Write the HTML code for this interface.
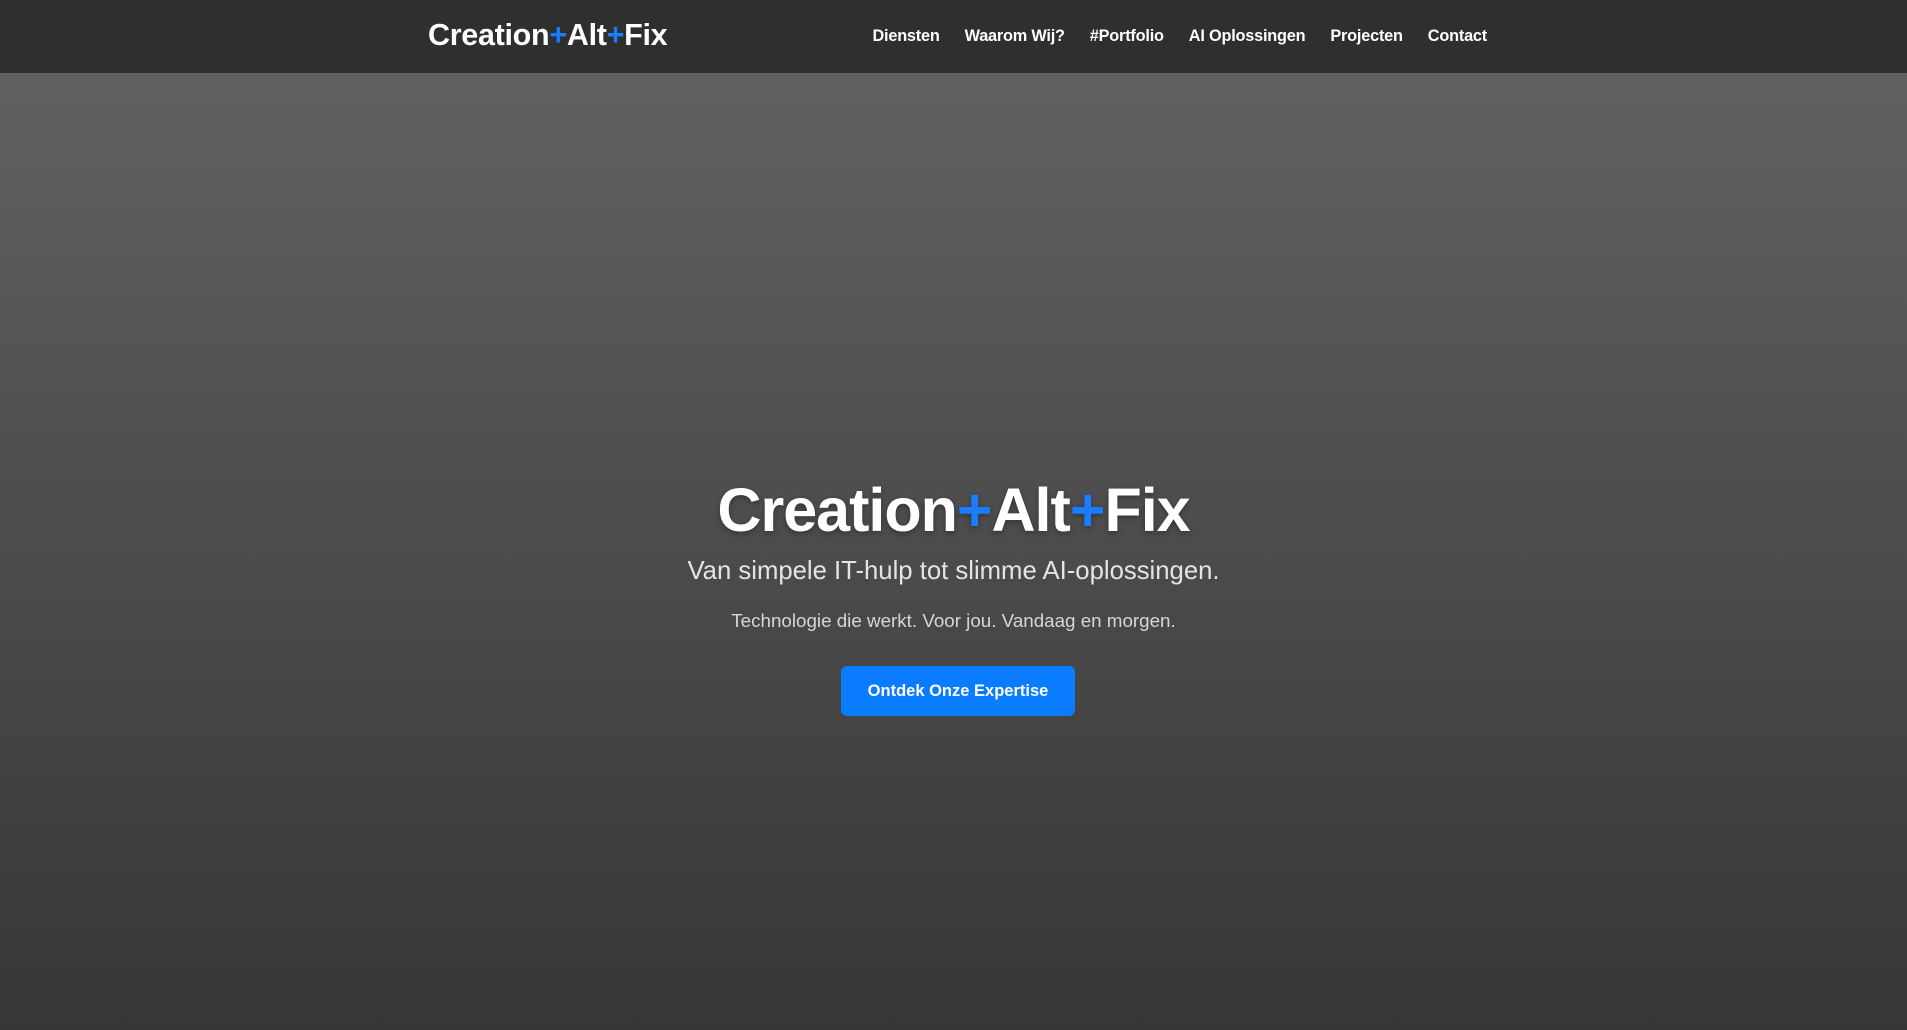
<!DOCTYPE html>
<html><head><meta charset="utf-8"><style>
*{margin:0;padding:0;box-sizing:border-box}
body{width:1907px;height:1030px;overflow:hidden;font-family:"Liberation Sans",sans-serif;background:linear-gradient(#646464,#363636);position:relative}
nav{position:absolute;top:0;left:0;width:1907px;height:73px;background:#2f2f2f}
.logo{position:absolute;left:428px;top:18px;font-size:30.5px;font-weight:bold;color:#fff;letter-spacing:-0.3px}
.b{color:#1a7cff}
.links{position:absolute;right:420px;top:27px;display:flex;gap:25px;font-size:16.3px;color:#fff;font-weight:bold;letter-spacing:-0.2px}
h1{position:absolute;left:0;width:1907px;top:475px;text-align:center;font-size:61px;font-weight:bold;color:#fff;letter-spacing:-1px;text-shadow:0 2px 6px rgba(0,0,0,.35)}
.sub{position:absolute;left:0;width:1907px;top:557px;text-align:center;font-size:25.7px;color:#e4e4e4}
.tag{position:absolute;left:0;width:1907px;top:610px;text-align:center;font-size:18.8px;color:#d6d6d6}
.btn{position:absolute;left:841px;top:666px;width:234px;height:50px;background:#0a7cff;border-radius:6px;color:#fff;font-weight:bold;font-size:16.5px;text-align:center;line-height:51px}
</style></head><body>
<nav><div class="logo">Creation<span class="b">+</span>Alt<span class="b">+</span>Fix</div>
<div class="links"><span>Diensten</span><span>Waarom Wij?</span><span>#Portfolio</span><span>AI Oplossingen</span><span>Projecten</span><span>Contact</span></div></nav>
<h1>Creation<span class="b">+</span>Alt<span class="b">+</span>Fix</h1>
<div class="sub">Van simpele IT-hulp tot slimme AI-oplossingen.</div>
<div class="tag">Technologie die werkt. Voor jou. Vandaag en morgen.</div>
<div class="btn">Ontdek Onze Expertise</div>
</body></html>
